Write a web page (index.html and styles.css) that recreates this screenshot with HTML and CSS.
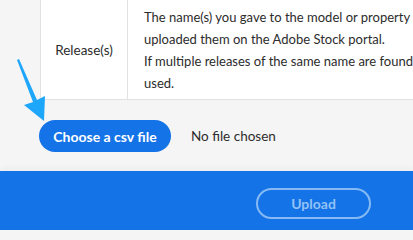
FILE: index.html
```html
<!DOCTYPE html>
<html>
<head>
<meta charset="utf-8">
<link rel="stylesheet" href="styles.css">
</head>
<body>
<div class="page">
  <table class="info">
    <tr>
      <td class="label">Release(s)</td>
      <td class="desc">The name(s) you gave to the model or property<br>uploaded them on the Adobe Stock portal.<br>If multiple releases of the same name are found<br>used.</td>
    </tr>
  </table>
  <div class="file-row">
    <button class="choose">Choose a csv file</button>
    <span class="nofile">No file chosen</span>
  </div>
  <footer class="bar">
    <button class="upload">Upload</button>
  </footer>
  <svg class="arrow" width="60" height="130" viewBox="0 0 60 130">
    <path d="M17 60 L19 59 L37 100 L45 96 L44 121 L24 105 L33 102 Z" fill="#1ea6fb"/>
  </svg>
</div>
</body>
</html>
```
FILE: styles.css
```css
html, body {
  margin: 0;
  padding: 0;
}
body {
  width: 413px;
  height: 230px;
  overflow: hidden;
  background: #f5f5f5;
  font-family: "Lato", "Open Sans", sans-serif;
  color: #2c2c2c;
}
.page {
  position: relative;
  height: 230px;
  display: flex;
  flex-direction: column;
  overflow: hidden;
}
.info {
  margin-left: 40px;
  border-collapse: collapse;
  background: #fff;
  width: 373px;
  flex: none;
}
.info td {
  border-left: 1px solid #e1e1e1;
  border-bottom: 1px solid #e1e1e1;
  font-size: 13px;
  line-height: 22px;
  padding: 6px 0 5px 0;
  vertical-align: middle;
}
.label {
  width: 86px;
  text-align: center;
  font-size: 13.5px !important;
}
.desc {
  padding-left: 16px !important;
  white-space: nowrap;
}
.file-row {
  display: flex;
  align-items: center;
  gap: 20px;
  margin: 20px 0 0 39px;
  height: 32px;
  flex: none;
}
.choose {
  height: 32px;
  width: 132px;
  border: none;
  border-radius: 16px;
  background: #1473e6;
  color: #fff;
  font-family: inherit;
  font-weight: 700;
  font-size: 14px;
  padding: 0;
}
.nofile {
  font-size: 13.5px;
}
.bar {
  margin-top: 19px;
  flex: 1;
  background: #1473e6;
  box-shadow: 0 -3px 6px rgba(0, 0, 0, 0.04);
  display: flex;
  justify-content: flex-end;
  align-items: flex-start;
  padding: 17px 42px 0 0;
}
.upload {
  width: 115px;
  height: 31px;
  border: 2px solid #86baf4;
  border-radius: 16px;
  background: transparent;
  color: #93c2f6;
  font-family: inherit;
  font-weight: 700;
  font-size: 14px;
  padding: 0;
}
.arrow {
  position: absolute;
  left: 0;
  top: 0;
}
```
